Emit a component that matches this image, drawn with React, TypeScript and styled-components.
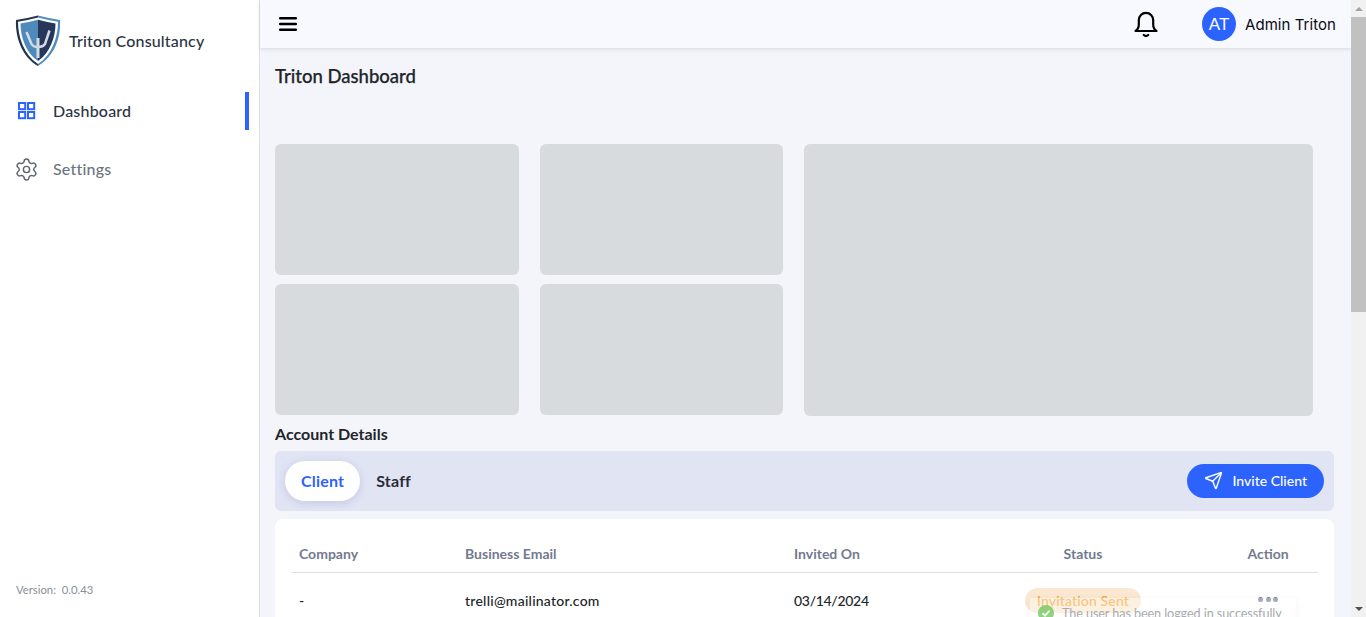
import React from "react";
import styled, { createGlobalStyle } from "styled-components";
import { Send, Settings } from "lucide-react";

const Global = createGlobalStyle`
  html, body { margin: 0; padding: 0; height: 100%; overflow: hidden; background: #f3f5fb; font-family: "Lato", sans-serif; color: #212529; }
  * { box-sizing: border-box; }
`;

const Shell = styled.div`
  display: flex;
  height: 100vh;
  overflow: hidden;
  position: relative;
`;

const Sidebar = styled.aside`
  flex: 0 0 260px;
  background: #fff;
  border-right: 1px solid #dfe1e6;
  display: flex;
  flex-direction: column;
`;

const Brand = styled.div`
  display: flex;
  align-items: flex-start;
  gap: 8px;
  padding: 15px 0 0 15px;
  height: 92px;
`;

const BrandName = styled.span`
  font-size: 16px;
  letter-spacing: 0.17px;
  font-weight: 500;
  color: #2a3342;
  line-height: 52px;
`;

const NavList = styled.nav`
  display: flex;
  flex-direction: column;
  gap: 20px;
`;

const NavItem = styled.a<{ $active?: boolean }>`
  display: flex;
  align-items: center;
  gap: ${(p) => (p.$active ? "16px" : "14px")};
  height: 38px;
  padding-left: ${(p) => (p.$active ? "17px" : "14px")};
  padding-bottom: 2px;
  margin-right: 10px;
  font-size: 16px;
  letter-spacing: 0.2px;
  font-weight: 500;
  color: ${(p) => (p.$active ? "#2a3342" : "#6c757d")};
  border-right: 4px solid ${(p) => (p.$active ? "#2c63ff" : "transparent")};
`;

const NavIconSlot = styled.span`
  display: flex;
  margin-top: 2px;
`;

const Version = styled.div`
  margin-top: auto;
  padding: 0 0 20px 16px;
  font-size: 11.3px;
  color: #8a9099;
  line-height: 15px;
`;

const Main = styled.div`
  flex: 1;
  min-width: 0;
  display: flex;
  flex-direction: column;
`;

const TopBar = styled.header`
  flex: 0 0 48px;
  background: #f7f9ff;
  box-shadow: 0 1px 4px rgba(60, 64, 90, 0.16);
  display: flex;
  align-items: center;
  padding: 0 15px 0 19px;
`;

const BurgerButton = styled.button`
  display: flex;
  border: 0;
  background: none;
  padding: 0;
  color: #000;
`;

const BellButton = styled.button`
  display: flex;
  margin-left: auto;
  border: 0;
  background: none;
  padding: 0;
`;

const Avatar = styled.div`
  width: 34px;
  height: 34px;
  border-radius: 50%;
  margin-left: 44px;
  padding-top: 1px;
  background: #2c63ff;
  color: #fff;
  font: 17px "Liberation Sans", sans-serif;
  display: flex;
  align-items: center;
  justify-content: center;
`;

const UserName = styled.span`
  margin-left: 9px;
  font: 400 15px "Inter", sans-serif;
  letter-spacing: 0.05px;
  color: #0a0a14;
`;

const Content = styled.main`
  padding: 17px 17px 0 15px;
`;

const PageTitle = styled.h1`
  margin: 0;
  font-size: 18.5px;
  font-weight: 500;
  line-height: 22px;
  color: #212529;
  -webkit-text-stroke: 0.25px #212529;
`;

const SkeletonGrid = styled.div`
  display: grid;
  grid-template-columns: 243.5px 243.5px 508.5px;
  grid-template-rows: 131px 131px;
  column-gap: 21px;
  row-gap: 9px;
  margin-top: 57px;
`;

const Skeleton = styled.div<{ $tall?: boolean }>`
  background: #d8dbde;
  border-radius: 6px;
  ${(p) => p.$tall && "grid-row: 1 / span 2; grid-column: 3; margin-bottom: -1px;"}
`;

const SectionTitle = styled.h2`
  margin: 9px 0 8px;
  font-size: 16px;
  font-weight: 700;
  line-height: 19px;
  color: #212529;
`;

const TabBar = styled.div`
  display: flex;
  align-items: center;
  height: 60px;
  padding: 0 10px;
  background: #e1e4f3;
  border-radius: 6px;
`;

const Tab = styled.button<{ $active?: boolean }>`
  height: 40px;
  padding: 0 16px 2px;
  border: 0;
  border-radius: 20px;
  font: 700 16px "Lato", sans-serif;
  letter-spacing: 0.2px;
  color: ${(p) => (p.$active ? "#2c63ff" : "#2a2d36")};
  background: ${(p) => (p.$active ? "#fff" : "transparent")};
  box-shadow: ${(p) => (p.$active ? "0 2px 8px rgba(70, 80, 170, 0.18)" : "none")};
`;

const InviteButton = styled.button`
  margin-left: auto;
  display: flex;
  align-items: center;
  gap: 9px;
  height: 34px;
  padding: 0 17px 1px 17px;
  border: 0;
  border-radius: 17px;
  background: #2c63ff;
  color: #fff;
  font: 500 14px "Lato", sans-serif;
`;

const TableCard = styled.section`
  margin-top: 8px;
  background: #fff;
  border-radius: 8px;
  padding: 16px 16px 20px;
`;

const Row = styled.div<{ $head?: boolean }>`
  display: grid;
  grid-template-columns: 166px 329px 154px 270px 1fr;
  align-items: center;
  padding-left: 8px;
  height: ${(p) => (p.$head ? "38px" : "54px")};
  ${(p) => p.$head && "border-bottom: 1px solid #dfe1e6;"}
`;

const HeadCell = styled.div<{ $center?: boolean }>`
  font-size: 14px;
  font-weight: 700;
  color: #737b90;
  ${(p) => p.$center && "text-align: center;"}
`;

const Cell = styled.div<{ $center?: boolean }>`
  font-size: 14px;
  font-weight: 500;
  letter-spacing: 0.24px;
  color: #212529;
  ${(p) => p.$center && "display: flex; justify-content: center;"}
`;

const DateCell = styled(Cell)`
  letter-spacing: -0.3px;
`;

const Badge = styled.span`
  display: inline-block;
  height: 25px;
  line-height: 25px;
  padding: 0 12px;
  border-radius: 13px;
  font-size: 14px;
  font-weight: 500;
  letter-spacing: 0.15px;
  color: #f7a531;
  background: #fbe8d2;
`;

const Dots = styled.span`
  display: flex;
  gap: 2.5px;
  justify-content: center;
  margin-bottom: 1px;
`;

const Dot = styled.i`
  width: 5px;
  height: 5px;
  border-radius: 50%;
  background: #737b90;
`;

const Toast = styled.div`
  position: absolute;
  left: 1030px;
  top: 598px;
  width: 266px;
  height: 44px;
  display: flex;
  align-items: flex-start;
  gap: 8px;
  padding: 0 8px;
  background: rgba(255, 255, 255, 0.35);
  box-shadow: 0 1px 8px rgba(0, 0, 0, 0.05);
  font-size: 12.6px;
  letter-spacing: -0.07px;
  color: #a8abaf;
`;

const ToastText = styled.span`
  padding-top: 8px;
  white-space: nowrap;
`;

const ToastIcon = styled.svg`
  flex: none;
  margin-top: 7px;
  opacity: 0.7;
`;

const ScrollTrack = styled.div`
  flex: 0 0 15px;
  display: flex;
  flex-direction: column;
  background: #f1f1f1;
`;

const ScrollArrow = styled.div<{ $down?: boolean }>`
  flex: 0 0 17px;
  display: flex;
  align-items: center;
  justify-content: center;
  &::before {
    content: "";
    border-left: 4px solid transparent;
    border-right: 4px solid transparent;
    ${(p) =>
      p.$down ? "border-top: 4px solid #505050;" : "border-bottom: 4px solid #a3a3a3;"}
  }
`;

const ScrollThumb = styled.div`
  flex: 0 0 295px;
  background: #c1c1c1;
`;

const ScrollRest = styled.div`
  flex: 1;
`;

const Logo = () => (
  <svg width="46" height="52" viewBox="0 0 46 52">
    <path d="M1 5 L23 0.5 L45 5 C46 22 40 41 23 51 C7 42 0 22 1 5Z" fill="#fff" />
    <path d="M1 5 Q12 3.4 23 0.5 L23 2.5 Q12 5.4 3 6.8 C3 22 9 40 23 49 L23 51 C7 42 0 22 1 5Z" fill="#24344f" />
    <path d="M23 0.5 Q34 3.4 45 5 C46 22 40 41 23 51 L23 49 C37 40 43 22 43 6.8 Q34 5.4 23 2.5Z" fill="#4f8cc0" />
    <path d="M5.5 8.5 Q15 7 23 4.8 L23 46 C11 38 5.5 22 5.5 8.5Z" fill="#4f8abc" />
    <path d="M23 4.8 Q31 7 40.5 8.5 C40.5 22 35 38 23 46Z" fill="#26385a" />
    <path d="M11.500 17 L16.500 29 Q18 32 23 32 Q28 32 30 29 L34.500 15.500" fill="none" stroke="#d3dae2" strokeWidth="2.500" />
    <path d="M23 23 L23 43" fill="none" stroke="#d3dae2" strokeWidth="3" />
  </svg>
);

const GridIcon = () => (
  <svg width="20" height="20" viewBox="0 0 20 20" fill="none" stroke="#2c63ff" strokeWidth="2">
    <rect x="2" y="2" width="6.200" height="6.200" />
    <rect x="11" y="2" width="6.200" height="6.200" />
    <rect x="2" y="11" width="6.200" height="6.200" />
    <rect x="11" y="11" width="6.200" height="6.200" />
  </svg>
);

const BellIcon = () => (
  <svg width="24" height="27" viewBox="0 0 24 27" fill="none" stroke="#000" strokeWidth="2.200" strokeLinecap="round" strokeLinejoin="round">
    <path d="M1.500 20c2.300-1.500 3.300-3.500 3.300-6.500V9a7.200 7.200 0 0 1 14.400 0v4.500c0 3 1 5 3.300 6.500z" />
    <path d="M9.800 24c1.300 1.200 3.100 1.200 4.400 0" strokeWidth="2.200" />
  </svg>
);

const BurgerIcon = () => (
  <svg width="18" height="16" viewBox="0 0 18 16" fill="#000">
    <rect x="0" y="1" width="18" height="2.500" rx="1" />
    <rect x="0" y="6.800" width="18" height="2.500" rx="1" />
    <rect x="0" y="12.500" width="18" height="2.500" rx="1" />
  </svg>
);

export default function App() {
  return (
    <>
      <Global />
      <Shell>
        <Sidebar>
          <Brand>
            <Logo />
            <BrandName>Triton Consultancy</BrandName>
          </Brand>
          <NavList>
            <NavItem $active>
              <NavIconSlot>
                <GridIcon />
              </NavIconSlot>
              Dashboard
            </NavItem>
            <NavItem>
              <NavIconSlot>
                <Settings size={25} strokeWidth={1.4} color="#5f6670" />
              </NavIconSlot>
              Settings
            </NavItem>
          </NavList>
          <Version>Version:&nbsp; 0.0.43</Version>
        </Sidebar>
        <Main>
          <TopBar>
            <BurgerButton aria-label="Menu">
              <BurgerIcon />
            </BurgerButton>
            <BellButton aria-label="Notifications">
              <BellIcon />
            </BellButton>
            <Avatar>AT</Avatar>
            <UserName>Admin Triton</UserName>
          </TopBar>
          <Content>
            <PageTitle>Triton Dashboard</PageTitle>
            <SkeletonGrid>
              <Skeleton />
              <Skeleton />
              <Skeleton $tall />
              <Skeleton />
              <Skeleton />
            </SkeletonGrid>
            <SectionTitle>Account Details</SectionTitle>
            <TabBar>
              <Tab $active>Client</Tab>
              <Tab>Staff</Tab>
              <InviteButton>
                <Send size={19} strokeWidth={1.8} />
                Invite Client
              </InviteButton>
            </TabBar>
            <TableCard>
              <Row $head>
                <HeadCell>Company</HeadCell>
                <HeadCell>Business Email</HeadCell>
                <HeadCell>Invited On</HeadCell>
                <HeadCell $center>Status</HeadCell>
                <HeadCell $center>Action</HeadCell>
              </Row>
              <Row>
                <Cell>-</Cell>
                <Cell>trelli@mailinator.com</Cell>
                <DateCell>03/14/2024</DateCell>
                <Cell $center>
                  <Badge>Invitation Sent</Badge>
                </Cell>
                <Cell>
                  <Dots>
                    <Dot />
                    <Dot />
                    <Dot />
                  </Dots>
                </Cell>
              </Row>
            </TableCard>
          </Content>
        </Main>
        <ScrollTrack>
          <ScrollArrow />
          <ScrollThumb />
          <ScrollRest />
          <ScrollArrow $down />
        </ScrollTrack>
        <Toast>
          <ToastIcon width="16" height="16" viewBox="0 0 16 16">
            <circle cx="8" cy="8" r="8" fill="#5fc24a" />
            <path d="M4.500 8.200l2.500 2.500 4.500-5" fill="none" stroke="#fff" strokeWidth="1.800" />
          </ToastIcon>
          <ToastText>The user has been logged in successfully</ToastText>
        </Toast>
      </Shell>
    </>
  );
}
